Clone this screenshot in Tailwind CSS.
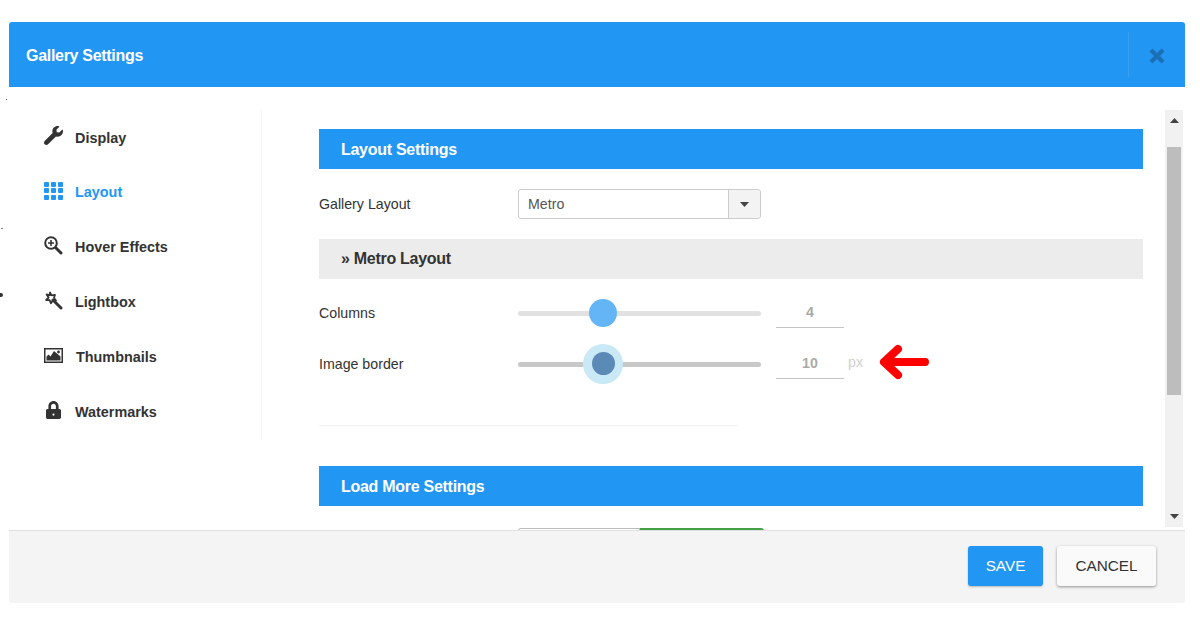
<!DOCTYPE html>
<html lang="en">
<head>
    <meta charset="UTF-8">
    <meta name="viewport" content="width=device-width, initial-scale=1.0">
    <title>Gallery Settings</title>
    <script src="https://cdn.jsdelivr.net/npm/@tailwindcss/browser@4"></script>
</head>
<body class="relative bg-white h-[627px] overflow-hidden pt-[22px] font-['Liberation_Sans',Arial,sans-serif] text-[#333]">
    <!-- Specks left of the modal -->
    <span class="absolute left-[6px] top-[99px] w-[1px] h-[1px] bg-[#555]"></span>
    <span class="absolute left-[1px] top-[228px] w-[2px] h-[1px] bg-[#777]"></span>
    <span class="absolute left-0 top-[293px] w-[3px] h-[4px] rounded-r-full bg-[#333]"></span>

    <!-- Modal -->
    <div class="ml-[9px] w-[1176px] h-[581px] flex flex-col">
        <!-- Header -->
        <header class="h-[65px] shrink-0 bg-[#2196f3] rounded-t-[3px] flex items-center justify-between text-white">
            <h1 class="pl-[17px] pt-[3px] text-[16px] tracking-[-0.3px] font-bold">Gallery Settings</h1>
            <div class="h-[45px] w-[57px] border-l border-[#3a9ff0] flex items-center justify-center">
                <svg class="w-[18px] h-[18px] mt-[2px]" viewBox="0 0 18 18"><path d="M3 3 15 15M15 3 3 15" stroke="#1b70b4" stroke-width="4.2" fill="none"/></svg>
            </div>
        </header>

        <!-- Body -->
        <div class="h-[443px] shrink-0 flex overflow-hidden">
            <!-- Sidebar -->
            <nav class="w-[253px] h-[330px] mt-[23px] pt-[1px] shrink-0 border-r border-[#f6f6f6] pl-[35px] text-[14.4px] font-bold">
                <div class="h-[54.8px] flex items-center gap-[12px]">
                    <svg class="w-[19px] h-[19px] -mt-[5px]" viewBox="0 0 512 512"><path fill="#333" d="M507.73 109.1c-2.24-9.03-13.54-12.09-20.12-5.51l-74.36 74.36-67.88-11.31-11.31-67.88 74.36-74.36c6.62-6.62 3.43-17.9-5.66-20.16-47.38-11.74-99.55.91-136.58 37.93-39.64 39.64-50.55 97.1-34.05 147.2L18.74 402.76c-24.99 24.99-24.99 65.51 0 90.5 24.99 24.99 65.51 24.99 90.5 0l213.21-213.21c50.12 16.71 107.47 5.68 147.37-34.22 37.07-37.07 49.7-89.32 37.91-136.73z"/></svg>
                    <span>Display</span>
                </div>
                <div class="h-[54.8px] flex items-center gap-[12px] text-[#2196f3]">
                    <div class="w-[19px] h-[18px] -mt-[5px] grid grid-cols-3 gap-[1.5px]">
                        <span class="bg-[#2196f3] rounded-[1px]"></span><span class="bg-[#2196f3] rounded-[1px]"></span><span class="bg-[#2196f3] rounded-[1px]"></span>
                        <span class="bg-[#2196f3] rounded-[1px]"></span><span class="bg-[#2196f3] rounded-[1px]"></span><span class="bg-[#2196f3] rounded-[1px]"></span>
                        <span class="bg-[#2196f3] rounded-[1px]"></span><span class="bg-[#2196f3] rounded-[1px]"></span><span class="bg-[#2196f3] rounded-[1px]"></span>
                    </div>
                    <span>Layout</span>
                </div>
                <div class="h-[54.8px] flex items-center gap-[12px]">
                    <svg class="w-[19px] h-[19px] -mt-[5px]" viewBox="0 0 19 19"><circle cx="7" cy="7" r="5.8" fill="none" stroke="#333" stroke-width="2"/><path d="M4 7h6M7 4v6" stroke="#333" stroke-width="1.6" fill="none"/><path d="M12 12 17 17" stroke="#333" stroke-width="3" stroke-linecap="round" fill="none"/></svg>
                    <span>Hover Effects</span>
                </div>
                <div class="h-[54.8px] flex items-center gap-[12px]">
                    <svg class="w-[19px] h-[19px] -mt-[5px]" viewBox="0 0 19 19"><path d="M9 9 17 17" stroke="#333" stroke-width="3" stroke-linecap="round" fill="none"/><path d="M6 1.5 7.6 4.4 11 3.8 10 7 12 9.5 8.8 9.6 7 12.3 5.6 9.2 2.2 9 4.6 6.6 2.6 3.4 5.8 4.2Z" fill="none" stroke="#333" stroke-width="1.8" stroke-linejoin="round"/></svg>
                    <span>Lightbox</span>
                </div>
                <div class="h-[54.8px] flex items-center gap-[13px]">
                    <svg class="w-[19px] h-[15px] -mt-[5px]" viewBox="0 0 19 15"><path fill="#333" d="M0 0h19v15H0z"/><path fill="#fff" d="M1.5 1.5h16v12h-16z"/><path fill="#333" d="M2.5 12.5V8.5l2-2 2 2L10 3l6.5 5.5v4z"/><circle cx="14.5" cy="4" r="1.4" fill="#333"/></svg>
                    <span>Thumbnails</span>
                </div>
                <div class="h-[54.8px] flex items-center gap-[14px]">
                    <svg class="w-[15px] h-[18px] ml-[2px] -mt-[5px]" viewBox="0 0 448 512" preserveAspectRatio="none"><path fill="#333" d="M400 224h-24v-72C376 68.2 307.8 0 224 0S72 68.2 72 152v72H48c-26.5 0-48 21.5-48 48v192c0 26.5 21.5 48 48 48h352c26.5 0 48-21.5 48-48V272c0-26.5-21.5-48-48-48zm-104 0H152v-72c0-39.7 32.3-72 72-72s72 32.3 72 72v72z"/><circle cx="224" cy="384" r="32" fill="#fff"/></svg>
                    <span>Watermarks</span>
                </div>
            </nav>

            <!-- Settings -->
            <main class="w-[882px] shrink-0 pl-[57px] pt-[42px]">
                <section class="w-[824px]">
                    <h2 class="h-[40px] pt-[2px] bg-[#2196f3] text-white text-[16px] tracking-[-0.28px] font-bold flex items-center pl-[22px]">Layout Settings</h2>

                    <div class="flex items-center h-[30px] mt-[20px] text-[14.2px]">
                        <label class="w-[199px] pt-[1px]">Gallery Layout</label>
                        <div class="w-[243px] h-[30px] flex border border-[#ccc] rounded-[3px]">
                            <span class="flex-1 pl-[9px] pt-[1px] flex items-center text-[#555]">Metro</span>
                            <span class="w-[32px] bg-[#f3f3f3] border-l border-[#ccc] rounded-r-[3px] flex items-center justify-center">
                                <svg class="w-[9px] h-[5px]" viewBox="0 0 9 5"><path d="M0 0h9L4.5 5z" fill="#444"/></svg>
                            </span>
                        </div>
                    </div>

                    <h3 class="h-[40px] mt-[20px] bg-[#ececec] text-[#333] text-[16px] tracking-[-0.28px] font-bold flex items-center pl-[22px]">» Metro Layout</h3>

                    <div class="flex items-center h-[30px] mt-[19px] text-[14.2px]">
                        <label class="w-[199px] pt-[1px]">Columns</label>
                        <div class="relative w-[243px] h-[5px] rounded-full bg-[#e1e1e1]">
                            <span class="absolute left-[71px] -top-[12px] w-[28px] h-[28px] rounded-full bg-[#64b5f6]"></span>
                        </div>
                        <div class="ml-[15px] w-[68px] h-[30px] border-b border-[#c4c4c4] flex items-center justify-center font-bold text-[#aaa]">4</div>
                    </div>

                    <div class="flex items-center h-[30px] mt-[21px] text-[14.2px]">
                        <label class="w-[199px] pt-[1px]">Image border</label>
                        <div class="relative w-[243px] h-[5px] rounded-full bg-[#c8c8c8]">
                            <span class="absolute left-[65px] -top-[18px] w-[40px] h-[40px] rounded-full bg-[#c8e9f5] flex items-center justify-center">
                                <span class="w-[23px] h-[23px] rounded-full bg-[#5a8ab5]"></span>
                            </span>
                        </div>
                        <div class="ml-[15px] w-[68px] h-[30px] border-b border-[#c4c4c4] flex items-center justify-center font-bold text-[#aaa]">10</div>
                        <span class="ml-[4px] -mt-[2px] text-[#d0d0d0]">px</span>
                        <svg class="ml-[15px] -mt-[4px] w-[52px] h-[36px]" viewBox="0 0 52 36"><path d="M20 5 6 18 20 31M6 18H47" fill="none" stroke="#ff0000" stroke-width="8" stroke-linecap="round" stroke-linejoin="round"/></svg>
                    </div>

                    <hr class="w-[419px] mt-[46px] border-[#f1f1f1]">

                    <h2 class="h-[40px] mt-[40px] pt-[2px] bg-[#2196f3] text-white text-[16px] tracking-[-0.28px] font-bold flex items-center pl-[22px]">Load More Settings</h2>

                    <div class="ml-[199px] mt-[22px] w-[246px] h-[20px] flex">
                        <span class="w-[122px] border-t border-x border-[#bbb] rounded-tl-[3px]"></span>
                        <span class="w-[124px] bg-[#43a047] rounded-tr-[3px]"></span>
                    </div>
                </section>
            </main>

            <!-- Scrollbar -->
            <div class="w-[18px] h-[417px] mt-[23px] ml-[21px] shrink-0 bg-[#f1f1f1] flex flex-col items-center">
                <svg class="w-[9px] h-[5px] shrink-0 mt-[8px]" viewBox="0 0 9 5"><path d="M4.5 0 9 5H0z" fill="#444"/></svg>
                <div class="w-[14px] h-[248px] shrink-0 mt-[24px] bg-[#bdbdbd]"></div>
                <svg class="w-[9px] h-[5px] shrink-0 mt-[119px]" viewBox="0 0 9 5"><path d="M0 0h9L4.5 5z" fill="#444"/></svg>
            </div>
        </div>

        <!-- Footer -->
        <footer class="h-[73px] shrink-0 bg-[#f4f4f4] border-t border-[#e0e0e0] rounded-b-[3px] flex justify-end items-start pt-[15px] pr-[29px] gap-[14px] text-[15.3px]">
            <button class="w-[75px] h-[40px] bg-[#2196f3] text-white rounded-[3px] shadow-[0_1px_2px_rgba(0,0,0,0.25)]">SAVE</button>
            <button class="w-[99px] h-[40px] bg-[#fafafa] text-[#333] rounded-[3px] shadow-[0_1px_3px_rgba(0,0,0,0.4)]">CANCEL</button>
        </footer>
    </div>
</body>
</html>
